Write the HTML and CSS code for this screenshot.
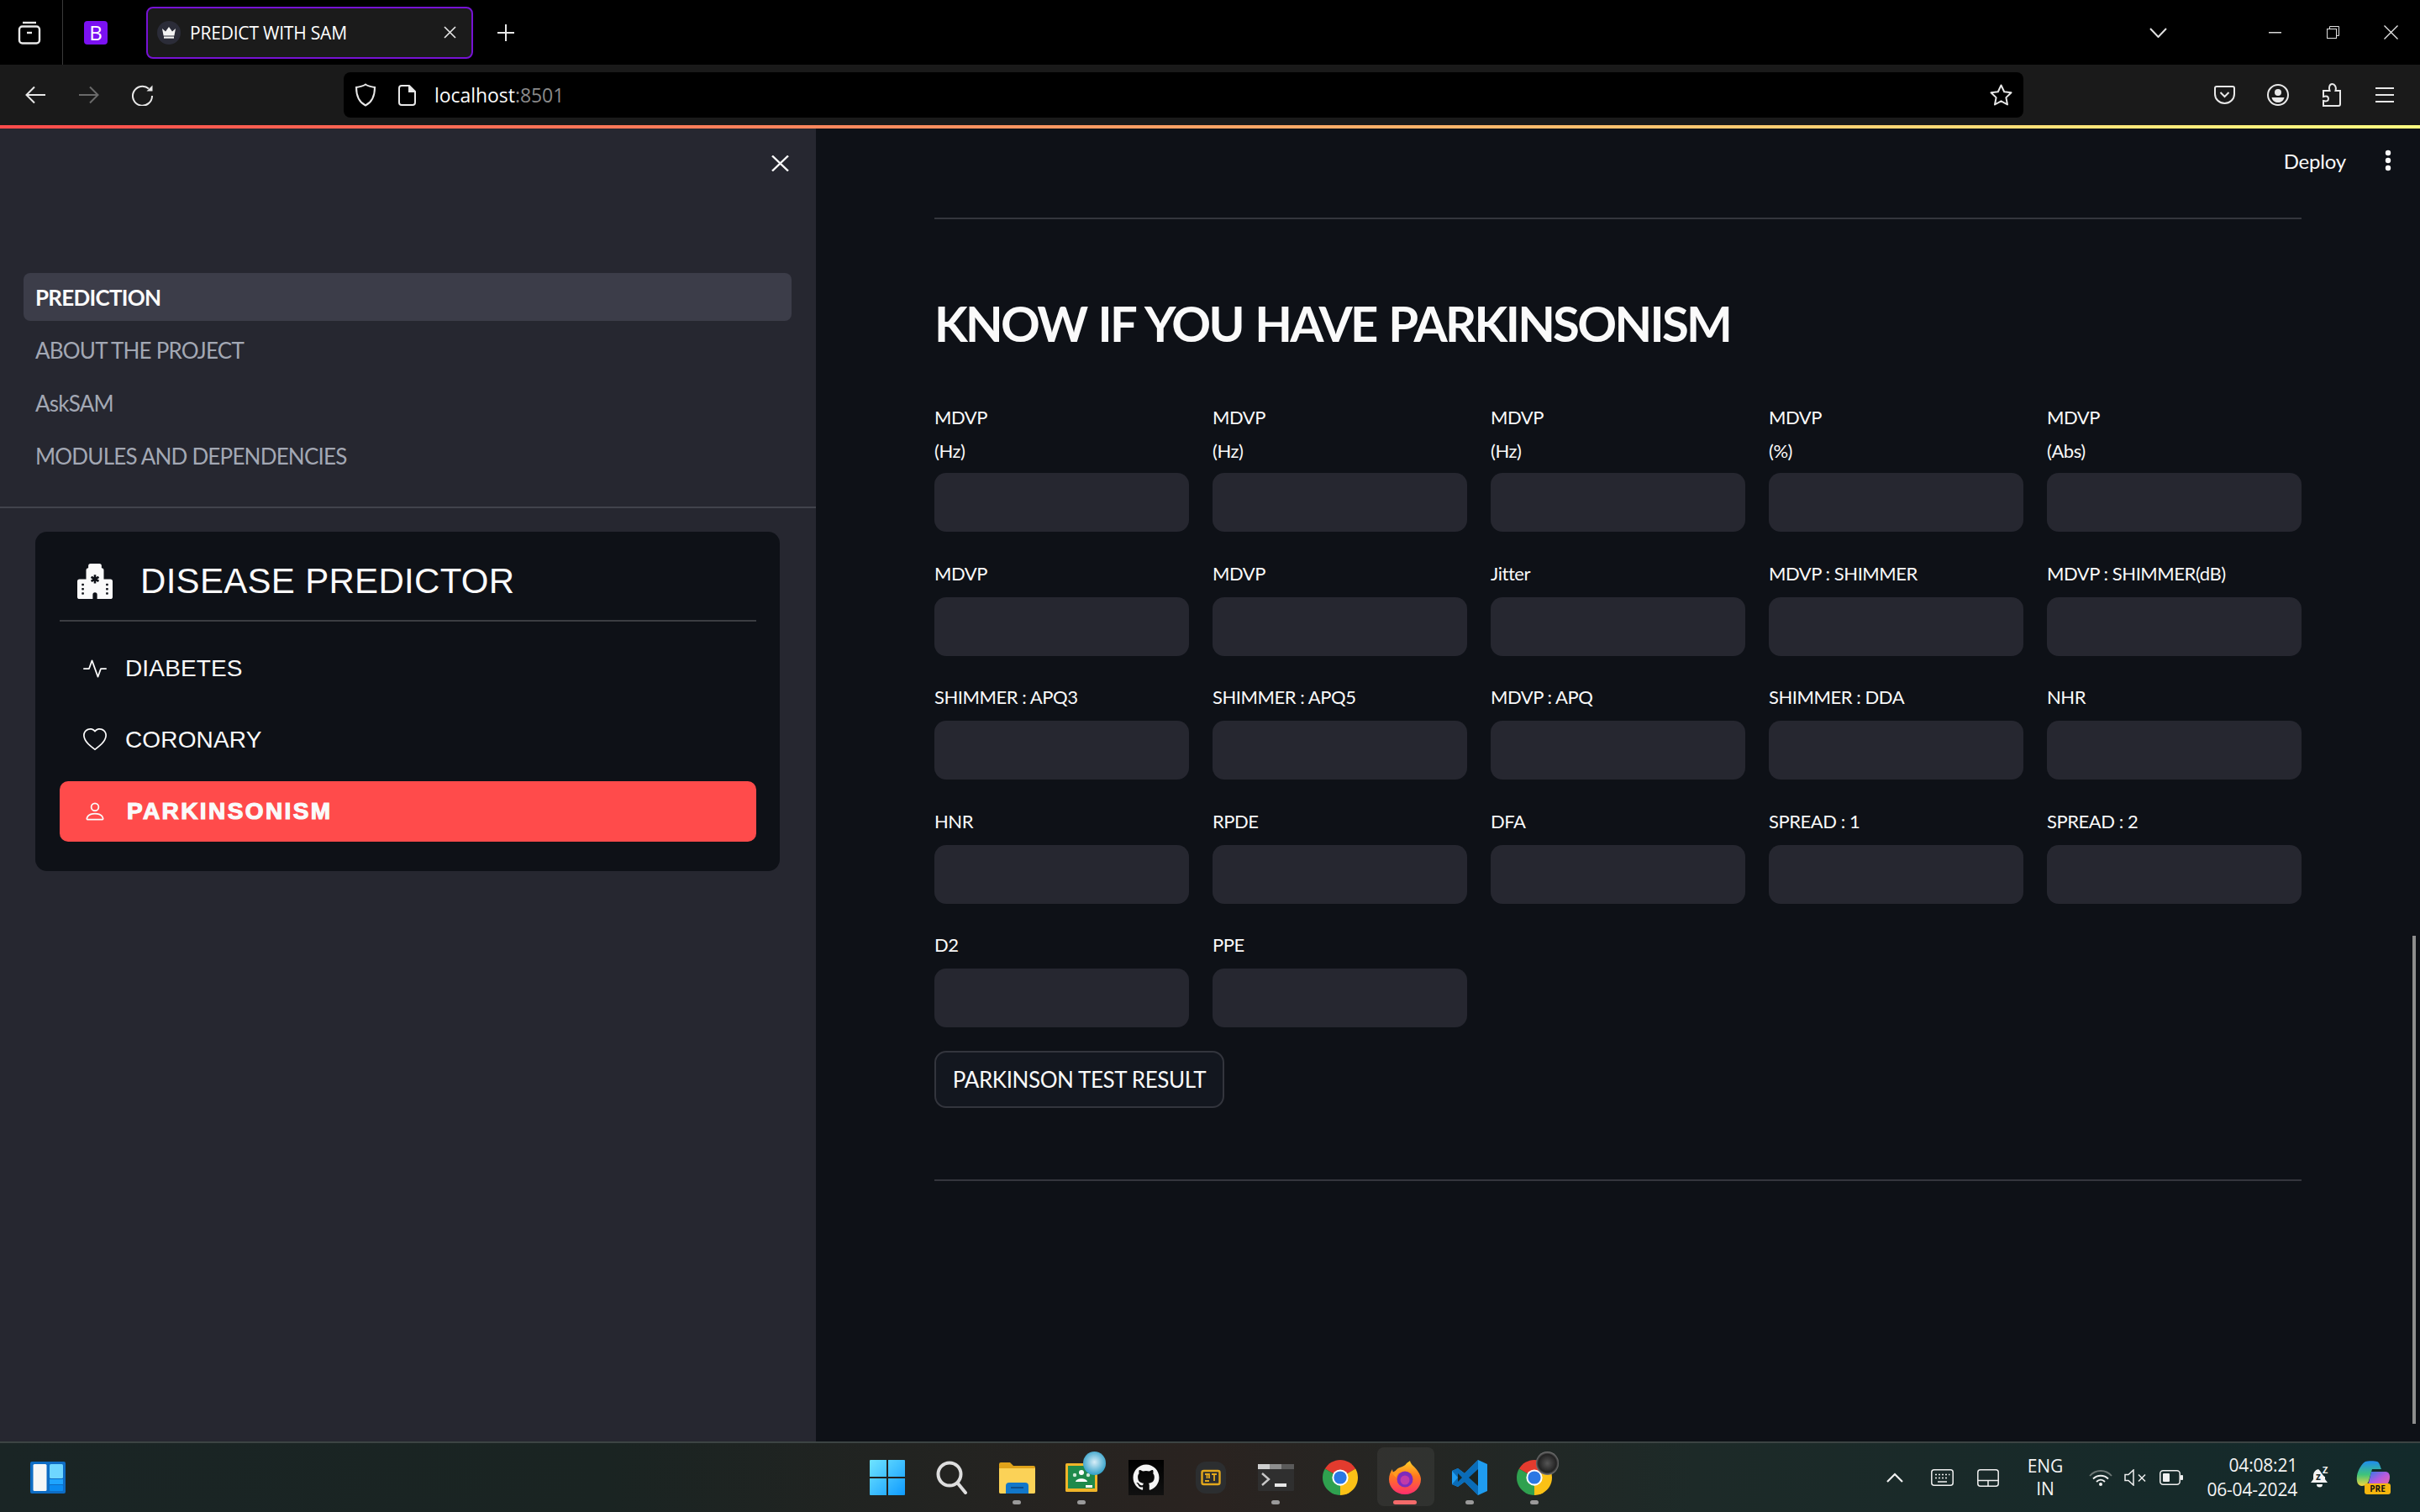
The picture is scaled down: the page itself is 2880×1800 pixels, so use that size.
FILE: index.html
```html
<!DOCTYPE html>
<html lang="en">
<head>
<meta charset="utf-8">
<title>PREDICT WITH SAM</title>
<link rel="stylesheet" href="styles.css">
</head>
<body>
<div class="window">
  <header class="tabbar">
    <svg class="i-group" width="28" height="28" viewBox="0 0 28 28" fill="none" stroke="#e8e8e8" stroke-width="2.4"><path d="M6 2h16"/><rect x="2" y="6.5" width="24" height="20" rx="3.5"/><path d="M11 14h6"/></svg>
    <div class="tab-sep"></div>
    <span class="i-b">B</span>
    <div class="tab">
      <span class="fav"><svg width="18" height="14" viewBox="0 0 18 14"><path d="M1 2l4 3.500L9 0l4 5.500L17 2l-1.600 8.500H2.600z" fill="#f4f4f4"/><rect x="3" y="11.500" width="12" height="2.200" fill="#f4f4f4"/></svg></span>
      <span class="tab-title">PREDICT WITH SAM</span>
      <svg class="tab-x" width="15" height="15" viewBox="0 0 15 15" stroke="#e8e8e8" stroke-width="1.600"><path d="M1 1l13 13M14 1L1 14"/></svg>
    </div>
    <svg class="i-plus" width="20" height="20" viewBox="0 0 20 20" stroke="#e8e8e8" stroke-width="2"><path d="M10 0v20M0 10h20"/></svg>
    <div class="win-ctrls">
      <svg class="i-chev" width="21" height="12" viewBox="0 0 21 12" fill="none" stroke="#e0e0e0" stroke-width="2"><path d="M1 1l9.500 10L20 1"/></svg>
      <svg class="i-min" width="15" height="2" viewBox="0 0 15 2"><rect width="15" height="1.500" fill="#d8d8d8"/></svg>
      <svg class="i-res" width="15" height="15" viewBox="0 0 15 15" fill="none" stroke="#e0e0e0" stroke-width="1"><rect x=".5" y="3.500" width="11" height="11"/><path d="M3.500 3.500v-3h11v11h-3"/></svg>
      <svg class="i-close" width="17" height="17" viewBox="0 0 17 17" stroke="#e8e8e8" stroke-width="1.300"><path d="M.5.500l16 16M16.500.500l-16 16"/></svg>
    </div>
  </header>

  <nav class="toolbar">
    <svg class="i-back" width="24" height="22" viewBox="0 0 24 22" fill="none" stroke="#e8e8e8" stroke-width="2"><path d="M24 11H2M11 1.500L1.500 11l9.500 9.500"/></svg>
    <svg class="i-fwd" width="24" height="22" viewBox="0 0 24 22" fill="none" stroke="#6a6a6a" stroke-width="2"><path d="M0 11h22M13 1.500l9.500 9.500-9.500 9.500"/></svg>
    <svg class="i-reload" width="25" height="26" viewBox="0 0 25 26" fill="none" stroke="#e8e8e8" stroke-width="2"><path d="M20 5.500A11.500 11.500 0 1 0 24 14"/><path d="M17.500 8.500H24.500V1.500z" fill="#e8e8e8" stroke="none"/></svg>
    <div class="urlbar">
      <svg width="26" height="28" viewBox="0 0 26 28" fill="none" stroke="#e8e8e8" stroke-width="2"><path d="M13 1.500c3 2 7 3 11 3.500 0 10-3 17.500-11 21.500C5 22.500 2 15 2 5c4-.5 8-1.500 11-3.500z"/></svg>
      <svg class="i-page" width="21" height="25" viewBox="0 0 21 25" fill="none" stroke="#e8e8e8" stroke-width="2"><path d="M4 1h9l7 7v13a3 3 0 0 1-3 3H4a3 3 0 0 1-3-3V4a3 3 0 0 1 3-3z"/><path d="M13 1v7h7" fill="#e8e8e8"/></svg>
      <span class="url"><span class="url-host">localhost</span><span class="url-port">:8501</span></span>
      <svg class="i-star" width="27" height="26" viewBox="0 0 27 26" fill="none" stroke="#e8e8e8" stroke-width="2" stroke-linejoin="round"><path d="M13.500 1.500l3.700 7.800 8.300 1-6.100 5.800 1.600 8.400-7.500-4.200-7.500 4.200 1.600-8.400L1.500 10.300l8.300-1z"/></svg>
    </div>
    <svg class="i-pocket" width="25" height="22" viewBox="0 0 25 22" fill="none" stroke="#e8e8e8" stroke-width="2"><path d="M3 1h19a2 2 0 0 1 2 2v7a11.500 11 0 0 1-23 0V3a2 2 0 0 1 2-2z"/><path d="M7.500 8l5 5 5-5"/></svg>
    <svg class="i-acct" width="26" height="26" viewBox="0 0 26 26" fill="none" stroke="#e8e8e8" stroke-width="2"><circle cx="13" cy="13" r="12"/><circle cx="13" cy="10" r="4" fill="#e8e8e8" stroke="none"/><path d="M5.500 16h15c-1 4-4 6-7.500 6s-6.500-2-7.500-6z" fill="#e8e8e8" stroke="none"/></svg>
    <svg class="i-ext" width="23" height="28" viewBox="0 0 23 28" fill="none" stroke="#e8e8e8" stroke-width="2"><path d="M2 27h18a2 2 0 0 0 2-2V9h-5.500c1.500-4-1-8-4-8s-4.500 4-3 8H2v7c4-1.500 6 0 6 2.500S6 22 2 21z"/></svg>
    <svg class="i-menu" width="22" height="18" viewBox="0 0 22 18" stroke="#e8e8e8" stroke-width="2"><path d="M0 1h22M0 9h22M0 17h22"/></svg>
  </nav>

  <div class="app">
    <div class="decoration"></div>
    <aside class="sidebar">
      <div class="side-head">
        <svg width="21" height="19" viewBox="0 0 21 19" stroke="#fafafa" stroke-width="2.400"><path d="M1 .500l19 18M20 .500l-19 18"/></svg>
      </div>
      <ul class="pages">
        <li class="page active">PREDICTION</li>
        <li class="page">ABOUT THE PROJECT</li>
        <li class="page">AskSAM</li>
        <li class="page">MODULES AND DEPENDENCIES</li>
      </ul>
      <hr class="side-rule">
      <section class="card">
        <div class="card-head">
          <svg width="42" height="42" viewBox="0 0 16 16" fill="#fafafa"><path d="M6 0a1 1 0 0 0-1 1v1a1 1 0 0 0-1 1v4H1a1 1 0 0 0-1 1v7a1 1 0 0 0 1 1h6v-2a1 1 0 1 1 2 0v2h6a1 1 0 0 0 1-1V8a1 1 0 0 0-1-1h-3V3a1 1 0 0 0-1-1V1a1 1 0 0 0-1-1H6Zm2.500 5.034v1.100l.953-.55.5.867L9 7l.953.55-.5.866-.953-.55v1.100h-1v-1.100l-.953.55-.5-.866L7 7l-.953-.55.5-.866.953.55v-1.100h1ZM2.250 9h.5a.25.25 0 0 1 .25.25v.5a.25.25 0 0 1-.25.25h-.5A.25.25 0 0 1 2 9.750v-.5A.25.25 0 0 1 2.250 9Zm0 2h.5a.25.25 0 0 1 .25.25v.5a.25.25 0 0 1-.25.25h-.5a.25.25 0 0 1-.25-.25v-.5a.25.25 0 0 1 .25-.25ZM2 13.250a.25.25 0 0 1 .25-.25h.5a.25.25 0 0 1 .25.25v.5a.25.25 0 0 1-.25.25h-.5a.25.25 0 0 1-.25-.25v-.5ZM13.250 9h.5a.25.25 0 0 1 .25.25v.5a.25.25 0 0 1-.25.25h-.5a.25.25 0 0 1-.25-.25v-.5a.25.25 0 0 1 .25-.25ZM13 11.250a.25.25 0 0 1 .25-.25h.5a.25.25 0 0 1 .25.25v.5a.25.25 0 0 1-.25.25h-.5a.25.25 0 0 1-.25-.25v-.5Zm.25 1.750h.5a.25.25 0 0 1 .25.25v.5a.25.25 0 0 1-.25.25h-.5a.25.25 0 0 1-.25-.25v-.5a.25.25 0 0 1 .25-.25Z"/></svg>
          <span class="card-title">DISEASE PREDICTOR</span>
        </div>
        <hr class="card-rule">
        <div class="menu">
          <a class="item">
            <svg width="28" height="28" viewBox="0 0 16 16" fill="#fafafa"><path d="M6 2a.5.5 0 0 1 .47.33L10 12.036l1.530-4.208A.5.5 0 0 1 12 7.500h3.500a.5.5 0 0 1 0 1h-3.150l-1.880 5.170a.5.5 0 0 1-.94 0L6 3.964 4.470 8.171A.5.5 0 0 1 4 8.500H.5a.5.5 0 0 1 0-1h3.150l1.880-5.170A.5.5 0 0 1 6 2Z"/></svg>
            <span>DIABETES</span>
          </a>
          <a class="item">
            <svg width="28" height="28" viewBox="0 0 16 16" fill="#fafafa"><path d="m8 2.748-.717-.737C5.600.281 2.514.878 1.400 3.053c-.523 1.023-.641 2.500.314 4.385.92 1.815 2.834 3.989 6.286 6.357 3.452-2.368 5.365-4.542 6.286-6.357.955-1.886.838-3.362.314-4.385C13.486.878 10.400.28 8.717 2.010L8 2.748zM8 15C-7.333 4.868 3.279-3.040 7.824 1.143c.06.055.119.112.176.171a3.120 3.120 0 0 1 .176-.17C12.720-3.042 23.333 4.867 8 15z"/></svg>
            <span>CORONARY</span>
          </a>
          <a class="item selected">
            <svg width="28" height="28" viewBox="0 0 16 16" fill="#fafafa"><path d="M8 8a3 3 0 1 0 0-6 3 3 0 0 0 0 6Zm2-3a2 2 0 1 1-4 0 2 2 0 0 1 4 0Zm4 8c0 1-1 1-1 1H3s-1 0-1-1 1-4 6-4 6 3 6 4Zm-1-.004c-.001-.246-.154-.986-.832-1.664C11.516 10.680 10.289 10 8 10c-2.290 0-3.516.68-4.168 1.332-.678.678-.83 1.418-.832 1.664h10Z"/></svg>
            <span>PARKINSONISM</span>
          </a>
        </div>
      </section>
    </aside>

    <main class="main">
      <div class="main-top">
        <span class="deploy">Deploy</span>
        <svg width="8" height="26" viewBox="0 0 8 26" fill="#fafafa"><circle cx="4" cy="4" r="3.200"/><circle cx="4" cy="13" r="3.200"/><circle cx="4" cy="22" r="3.200"/></svg>
      </div>
      <hr class="rule">
      <h1 class="heading">KNOW IF YOU HAVE PARKINSONISM</h1>
      <form class="fields">
        <label class="field"><span class="lbl lbl-two">MDVP<br>(Hz)</span><span class="box"></span></label>
        <label class="field"><span class="lbl lbl-two">MDVP<br>(Hz)</span><span class="box"></span></label>
        <label class="field"><span class="lbl lbl-two">MDVP<br>(Hz)</span><span class="box"></span></label>
        <label class="field"><span class="lbl lbl-two">MDVP<br>(%)</span><span class="box"></span></label>
        <label class="field"><span class="lbl lbl-two">MDVP<br>(Abs)</span><span class="box"></span></label>
        <label class="field"><span class="lbl">MDVP</span><span class="box"></span></label>
        <label class="field"><span class="lbl">MDVP</span><span class="box"></span></label>
        <label class="field"><span class="lbl">Jitter</span><span class="box"></span></label>
        <label class="field"><span class="lbl">MDVP : SHIMMER</span><span class="box"></span></label>
        <label class="field"><span class="lbl">MDVP : SHIMMER(dB)</span><span class="box"></span></label>
        <label class="field"><span class="lbl">SHIMMER : APQ3</span><span class="box"></span></label>
        <label class="field"><span class="lbl">SHIMMER : APQ5</span><span class="box"></span></label>
        <label class="field"><span class="lbl">MDVP : APQ</span><span class="box"></span></label>
        <label class="field"><span class="lbl">SHIMMER : DDA</span><span class="box"></span></label>
        <label class="field"><span class="lbl">NHR</span><span class="box"></span></label>
        <label class="field"><span class="lbl">HNR</span><span class="box"></span></label>
        <label class="field"><span class="lbl">RPDE</span><span class="box"></span></label>
        <label class="field"><span class="lbl">DFA</span><span class="box"></span></label>
        <label class="field"><span class="lbl">SPREAD : 1</span><span class="box"></span></label>
        <label class="field"><span class="lbl">SPREAD : 2</span><span class="box"></span></label>
        <label class="field"><span class="lbl">D2</span><span class="box"></span></label>
        <label class="field"><span class="lbl">PPE</span><span class="box"></span></label>
      </form>
      <button class="result" type="button">PARKINSON TEST RESULT</button>
      <hr class="rule rule-end">
      <div class="scroll-thumb"></div>
    </main>
  </div>

  <footer class="taskbar">
    <svg class="i-widgets" width="42" height="38" viewBox="0 0 42 38"><rect width="42" height="38" rx="2" fill="#0e6cc4"/><rect x="3.500" y="3" width="16" height="32" rx="1.500" fill="#f6f6f6"/><rect x="23" y="3" width="16" height="17" rx="1.500" fill="#6fd6ff"/><rect x="23" y="21" width="16" height="6" fill="#1fa4ff"/><rect x="23" y="28" width="16" height="7" rx="1" fill="#0b8bf0"/></svg>
    <div class="apps">
      <div class="slot">
        <svg width="42" height="42" viewBox="0 0 42 42"><defs><linearGradient id="w1" x1="0" y1="0" x2="1" y2="1"><stop offset="0" stop-color="#6fe4ff"/><stop offset="1" stop-color="#0f9bff"/></linearGradient></defs><path fill="url(#w1)" d="M1 0h19v20H0V1a1 1 0 0 1 1-1zM22 0h19a1 1 0 0 1 1 1v19H22zM0 22h20v20H1a1 1 0 0 1-1-1zM22 22h20v19a1 1 0 0 1-1 1H22z"/></svg>
      </div>
      <div class="slot">
        <svg width="38" height="40" viewBox="0 0 38 40" fill="none" stroke="#dedede"><circle cx="16" cy="16" r="13.500" stroke-width="4"/><path d="M26 27l9 11" stroke-width="4" stroke-linecap="round"/></svg>
      </div>
      <div class="slot">
        <svg width="43" height="38" viewBox="0 0 43 38"><path d="M0 3a2 2 0 0 1 2-2h11l4 4h24a2 2 0 0 1 2 2v29a2 2 0 0 1-2 2H2a2 2 0 0 1-2-2z" fill="#e0a31a"/><path d="M0 8h43v28a2 2 0 0 1-2 2H2a2 2 0 0 1-2-2z" fill="#fbd257"/><path d="M8 38V29a4 4 0 0 1 4-4h19a4 4 0 0 1 4 4v9z" fill="#1277c9"/><rect x="14" y="30" width="15" height="2" fill="#0d4f8c"/></svg>
        <i class="dot"></i>
      </div>
      <div class="slot">
        <svg width="38" height="34" viewBox="0 0 38 34"><rect width="38" height="34" rx="1.500" fill="#f0b429"/><rect x="3" y="3" width="32" height="27" fill="#1f8a4c"/><circle cx="19" cy="11" r="3" fill="#fff"/><circle cx="11" cy="14" r="2.200" fill="#cfe8d6"/><circle cx="27" cy="14" r="2.200" fill="#cfe8d6"/><path d="M12 22c1-5 13-5 14 0z" fill="#fff"/><rect x="24" y="26" width="8" height="3" fill="#fff"/></svg>
        <i class="badge badge-blue"></i>
        <i class="dot"></i>
      </div>
      <div class="slot">
        <svg width="42" height="42" viewBox="0 0 42 42"><defs><linearGradient id="gh" x1="0" y1="0" x2="0" y2="1"><stop offset="0" stop-color="#000"/><stop offset="1" stop-color="#111"/></linearGradient></defs><rect width="42" height="42" fill="url(#gh)"/><path transform="translate(5.500 5.500) scale(1.290)" fill="#f4f4f4" d="M12 0C5.370 0 0 5.370 0 12c0 5.300 3.440 9.800 8.200 11.390.6.110.82-.26.82-.58 0-.29-.01-1.040-.02-2.040-3.340.73-4.040-1.610-4.040-1.610-.55-1.390-1.330-1.760-1.330-1.760-1.090-.74.08-.73.08-.73 1.200.08 1.840 1.240 1.840 1.240 1.070 1.830 2.810 1.300 3.500 1 .11-.78.42-1.300.76-1.600-2.670-.3-5.470-1.330-5.470-5.930 0-1.310.47-2.380 1.240-3.220-.14-.3-.54-1.520.1-3.180 0 0 1-.32 3.300 1.230a11.500 11.500 0 0 1 6 0c2.280-1.550 3.290-1.230 3.290-1.230.64 1.660.24 2.880.12 3.180a4.650 4.650 0 0 1 1.230 3.220c0 4.610-2.800 5.620-5.480 5.920.42.36.81 1.100.81 2.220 0 1.600-.02 2.900-.02 3.290 0 .32.22.7.82.58C20.560 21.800 24 17.300 24 12c0-6.630-5.370-12-12-12z"/></svg>
      </div>
      <div class="slot">
        <svg width="36" height="38" viewBox="0 0 36 38"><rect width="36" height="38" rx="12" fill="#2c2e30"/><rect x="7.500" y="11" width="21" height="16" rx="2" fill="none" stroke="#e3a81c" stroke-width="2.400"/><path d="M11 15h5v5M13.500 15v5M19 15h6M22 15v8M11 23h5" fill="none" stroke="#e3a81c" stroke-width="1.800"/></svg>
      </div>
      <div class="slot">
        <svg width="43" height="32" viewBox="0 0 43 32"><rect width="43" height="32" rx="1.500" fill="#2f2f2f"/><rect width="14" height="6" fill="#cfcfcf"/><rect x="14" width="14" height="6" fill="#8e8e8e"/><rect x="28" width="15" height="6" fill="#5a5a5a"/><path d="M5 11l8 7-8 7" fill="none" stroke="#c8c8c8" stroke-width="2.400"/><rect x="20" y="23" width="14" height="4" fill="#e8e8e8"/></svg>
        <i class="dot"></i>
      </div>
      <div class="slot">
        <svg width="42" height="42" viewBox="0 0 48 48"><path d="M24 24L3.220 12A24 24 0 0 1 44.780 12z" fill="#e33b2e"/><path d="M24 24L44.780 12A24 24 0 0 1 24 48z" fill="#fbc116"/><path d="M24 24L24 48A24 24 0 0 1 3.220 12z" fill="#2fa14f"/><circle cx="24" cy="24" r="11" fill="#fff"/><circle cx="24" cy="24" r="8.700" fill="#2b78e4"/></svg>
      </div>
      <div class="slot slot-active">
        <svg width="38" height="40" viewBox="0 0 38 40"><defs><linearGradient id="ff" x1="0" y1="0" x2="0" y2="1"><stop offset="0" stop-color="#ffd129"/><stop offset=".45" stop-color="#ff7a1c"/><stop offset="1" stop-color="#ff2d6f"/></linearGradient></defs><path fill="url(#ff)" d="M25 0c1 5 6 7 9 12 3 4 4 8 4 10 0 10-8 18-19 18S0 32 0 22c0-5 2-9 4-12 0 2 1 4 2 5 1-3 4-6 7-7 3-1 6-2 8-5 1-1 3-2 4-3z"/><circle cx="19" cy="22" r="9.500" fill="#7d2bbd"/><circle cx="19" cy="23" r="5.500" fill="#c23aa8"/><path d="M4 14c4-3 9-4 12-1-4 0-7 3-7 7-2-1-4-3-5-6z" fill="#ff9a1f"/></svg>
        <i class="dot dot-red"></i>
      </div>
      <div class="slot">
        <svg width="42" height="42" viewBox="0 0 42 42"><path d="M31 0l11 5v32l-11 5-16-16-8 6-7-3V13l7-3 8 6z" fill="#1f9cf0"/><path d="M31 0v42L15 26l-8 6-7-3 7-8-7-8 7-3 8 6z" fill="#0a6cb8"/><path d="M31 11L20 21l11 10z" fill="#1a2420"/><path d="M7 16v10l5-5z" fill="#1a2420"/></svg>
        <i class="dot"></i>
      </div>
      <div class="slot">
        <svg width="42" height="42" viewBox="0 0 48 48"><path d="M24 24L3.220 12A24 24 0 0 1 44.780 12z" fill="#e33b2e"/><path d="M24 24L44.780 12A24 24 0 0 1 24 48z" fill="#fbc116"/><path d="M24 24L24 48A24 24 0 0 1 3.220 12z" fill="#2fa14f"/><circle cx="24" cy="24" r="11" fill="#fff"/><circle cx="24" cy="24" r="8.700" fill="#2b78e4"/></svg>
        <i class="badge badge-grey"></i>
        <i class="dot"></i>
      </div>
    </div>
    <div class="tray">
      <svg class="t-chev" width="20" height="12" viewBox="0 0 20 12" fill="none" stroke="#f0f0f0" stroke-width="2.200"><path d="M1 11l9-9 9 9"/></svg>
      <svg class="t-kb" width="27" height="20" viewBox="0 0 27 20" fill="none" stroke="#f0f0f0" stroke-width="1.500"><rect x=".8" y=".8" width="25.400" height="18.400" rx="3"/><path d="M5 6.500h2M9 6.500h2M13 6.500h2M17 6.500h2M21 6.500h1.500M5 10.500h2M9 10.500h2M13 10.500h2M17 10.500h2M8 15h11" stroke-width="1.700"/></svg>
      <svg class="t-pad" width="26" height="21" viewBox="0 0 26 21" fill="none" stroke="#f0f0f0" stroke-width="1.500"><rect x=".8" y=".8" width="24.400" height="19.400" rx="3"/><path d="M1 13.500h24M13 13.500V20"/></svg>
      <div class="lang"><span>ENG</span><span>IN</span></div>
      <svg class="t-wifi" width="28" height="20" viewBox="0 0 28 20" fill="none"><path d="M1 8c7-8 19-8 26 0" stroke="#6d7675" stroke-width="1.800"/><path d="M5 11.500c5-5 13-5 18 0M9 15c3-3 7-3 10 0" stroke="#f0f0f0" stroke-width="1.900"/><circle cx="14" cy="18" r="2" fill="#f0f0f0"/></svg>
      <svg class="t-vol" width="27" height="20" viewBox="0 0 27 20" fill="none" stroke="#f0f0f0" stroke-width="1.500"><path d="M1 6.500h4L11 1v18l-6-5.500H1z"/><path d="M17 6.500l8 8M25 6.500l-8 8"/></svg>
      <svg class="t-bat" width="28" height="18" viewBox="0 0 28 18" fill="none" stroke="#f0f0f0" stroke-width="1.500"><rect x=".8" y=".8" width="23.400" height="16.400" rx="3.500"/><rect x="4" y="4" width="8" height="10" rx="1" fill="#f0f0f0" stroke="none"/><rect x="25" y="6" width="3" height="6" rx="1" fill="#f0f0f0" stroke="none"/></svg>
      <div class="clock"><span>04:08:21</span><span>06-04-2024</span></div>
      <svg class="t-bell" width="24" height="36" viewBox="0 -5 24 36"><path d="M9 3c-4 1-6 4-6 8v4l-3 4h20l-3-4v-3c-2 0-6-8-8-9z" fill="#f4f4f4"/><path d="M7 21h7a3.500 3.500 0 0 1-7 0z" fill="#f4f4f4"/><text x="6" y="16" class="zz">z</text><text x="14" y="8" class="zz zz-s">Z</text></svg>
      <div class="copilot">
        <svg width="41" height="32" viewBox="0 0 41 32"><defs><linearGradient id="cp1" x1="0" y1="0" x2="0" y2="1"><stop offset="0" stop-color="#1e8bf0"/><stop offset=".55" stop-color="#3fc47a"/><stop offset="1" stop-color="#f5d63d"/></linearGradient><linearGradient id="cp2" x1="0" y1="0" x2="1" y2="1"><stop offset="0" stop-color="#2a7de8"/><stop offset=".5" stop-color="#b45ae0"/><stop offset="1" stop-color="#f06aa0"/></linearGradient></defs><path d="M11 1c2-1 12-1 14 0 3 1 4 7 5 9H19l-4 14c-1 3-4 6-8 6-5 0-7-5-6-12C2 11 7 3 11 1z" fill="url(#cp1)"/><path d="M18 13h17c4 0 5 4 5 6 0 6-3 11-8 11H14z" fill="url(#cp2)"/></svg>
        <span class="pre">PRE</span>
      </div>
    </div>
  </footer>
</div>
</body>
</html>
```
FILE: styles.css
```css
* { box-sizing: border-box; }
html, body { margin: 0; padding: 0; height: 100%; background: #000; overflow: hidden; }
svg { display: block; flex: none; }
.window { width: 2880px; height: 1800px; display: flex; flex-direction: column; font-family: "Lato", "Open Sans", sans-serif; color: #fafafa; }

/* browser tab strip */
.tabbar { height: 77px; flex: none; display: flex; align-items: center; background: #000; padding-left: 21px; padding-right: 26px; }
.tab-sep { width: 1px; height: 77px; background: #3a3a3a; margin-left: 25px; }
.i-b { margin-left: 25px; width: 28px; height: 28px; display: flex; align-items: center; justify-content: center; flex: none; background: #7b11f2; border-radius: 4px; color: #fff; font: 400 24px/28px "Open Sans", sans-serif; }
.tab { margin-left: 46px; width: 389px; height: 62px; display: flex; align-items: center; background: #1b1b1b; border: 2px solid #7712d4; border-radius: 8px; padding-left: 11px; padding-right: 18px; }
.fav { width: 28px; height: 28px; border-radius: 50%; background: #2b2c38; display: flex; align-items: center; justify-content: center; }
.tab-title { margin-left: 11px; font: 400 21px "Open Sans", sans-serif; letter-spacing: -.2px; color: #fff; }
.tab-x { margin-left: auto; }
.i-plus { margin-left: 29px; }
.win-ctrls { margin-left: auto; display: flex; align-items: center; }
.i-min { margin-left: 121px; }
.i-res { margin-left: 54px; }
.i-close { margin-left: 53px; }

/* browser toolbar */
.toolbar { height: 72px; flex: none; display: flex; align-items: center; background: #1a1a1a; padding-left: 30px; }
.i-fwd { margin-left: 40px; }
.i-reload { margin-left: 39px; }
.urlbar { margin-left: 227px; width: 1999px; height: 54px; display: flex; align-items: center; background: #000; border-radius: 8px; padding: 0 13px; }
.i-page { margin-left: 26px; }
.url { margin-left: 22px; font: 400 23px "Open Sans", sans-serif; letter-spacing: -.05px; }
.url-host { color: #fbfbfb; }
.url-port { color: #8a8a8a; }
.i-star { margin-left: auto; }
.i-pocket { margin-left: 227px; }
.i-acct { margin-left: 38px; }
.i-ext { margin-left: 39px; }
.i-menu { margin-left: 41px; }

/* streamlit app */
.app { position: relative; flex: 1; min-height: 0; display: flex; background: #0e1117; }
.decoration { position: absolute; top: 0; left: 0; right: 0; height: 4px; background: linear-gradient(90deg, #ff4b4b, #fffd80); z-index: 2; }

.sidebar { width: 971px; flex: none; background: #262730; display: flex; flex-direction: column; }
.side-head { height: 176px; display: flex; justify-content: flex-end; padding: 36px 32px 0 0; }
.pages { list-style: none; margin: 0; padding: 0 29px 0 28px; display: flex; flex-direction: column; gap: 6.300px; }
.page { height: 57px; display: flex; align-items: center; padding-left: 14px; border-radius: 8px; font-size: 26px; letter-spacing: -.8px; color: #a3a8b4; }
.page.active { background: #3c3d49; color: #fafafa; font-weight: 700; letter-spacing: -.75px; }
.side-rule { height: 2px; border: 0; margin: 31px 0 28px; background: #41434c; }

.card { margin: 0 43px 0 42px; background: #0e1117; border-radius: 14px; padding: 20px 28px 35px 29px; }
.card-head { height: 78px; display: flex; align-items: center; padding-left: 21px; }
.card-title { margin-left: 33px; font: 400 42px "Liberation Sans", Arial, sans-serif; letter-spacing: .3px; color: #fafafa; }
.card-rule { height: 2px; border: 0; margin: 7px 0 20px; background: #3b3d42; }
.menu { display: flex; flex-direction: column; gap: 13px; }
.item { height: 72px; display: flex; align-items: center; gap: 22px; padding-left: 28px; border-radius: 10px; font: 400 28px "Liberation Sans", Arial, sans-serif; letter-spacing: .15px; color: #fafafa; }
.item.selected { background: #ff4b4b; gap: 24px; font-weight: 700; letter-spacing: 2.400px; -webkit-text-stroke: 1.200px #fafafa; }

.main { position: relative; flex: 1; min-width: 0; padding: 110px 141px 0 141px; }
.main-top { position: absolute; top: 29px; right: 34px; height: 26px; display: flex; align-items: center; gap: 46px; }
.deploy { font-size: 24px; letter-spacing: -.2px; color: #fafafa; }
.rule { height: 2px; border: 0; margin: 0; background: #34363d; }
.heading { margin: 74px 0 40px; height: 100px; line-height: 100px; font-size: 58px; font-weight: 700; letter-spacing: -2.700px; word-spacing: 3px; color: #fafafa; white-space: nowrap; }
.fields { display: grid; grid-template-columns: repeat(5, 303px); column-gap: 28px; row-gap: 29.500px; }
.field { display: flex; flex-direction: column; justify-content: flex-end; gap: 8px; }
.lbl { font-size: 22px; line-height: 40px; letter-spacing: -.45px; color: #fafafa; }
.lbl-two { padding-top: 2px; margin-bottom: -2px; }
.box { height: 70px; background: #262730; border-radius: 14px; }
.result { display: block; margin-top: 28px; width: 345px; height: 68px; padding: 0; background: #13171f; border: 2px solid #33353d; border-radius: 14px; color: #fafafa; font: 400 26px "Lato", sans-serif; letter-spacing: -.4px; }
.rule-end { margin-top: 85px; }
.scroll-thumb { position: absolute; top: 965px; right: 5px; width: 4px; height: 581px; background: #8e8e8e; }

/* windows taskbar */
.taskbar { height: 84px; flex: none; display: flex; align-items: center; border-top: 2px solid #3c4443; background: linear-gradient(90deg, #1a2525 0%, #1a2422 25%, #2a2320 50%, #1d2a28 70%, #132a2b 100%); padding-left: 36px; padding-right: 35px; }
.apps { margin-left: 939.500px; display: flex; }
.slot { position: relative; width: 77px; height: 82px; display: flex; align-items: center; justify-content: center; }
.slot-active::before { content: ""; position: absolute; left: 5px; right: 4px; top: 5px; bottom: 7px; background: rgba(255,255,255,.06); border-radius: 8px; }
.slot svg { position: relative; }
.dot { position: absolute; left: 50%; bottom: 9px; width: 10px; height: 5px; margin-left: -5px; border-radius: 3px; background: #9a9a9a; }
.dot-red { width: 28px; margin-left: -14px; background: #f26a6a; }
.badge { position: absolute; left: 50%; top: 10px; width: 27px; height: 28px; margin-left: 2px; border-radius: 50%; }
.badge-blue { background: radial-gradient(circle at 50% 45%, #d8eef8, #2f9fc8 75%); }
.badge-grey { background: radial-gradient(circle at 50% 50%, #555, #222 55%, #ddd 90%); }
.tray { margin-left: auto; display: flex; align-items: center; color: #f4f4f4; }
.t-kb { margin-left: 33px; }
.t-pad { margin-left: 28px; }
.lang { margin-left: 30px; width: 50px; display: flex; flex-direction: column; align-items: center; font: 400 21px/27px "Open Sans", sans-serif; }
.t-wifi { margin-left: 27px; }
.t-vol { margin-left: 14px; }
.t-bat { margin-left: 15px; }
.clock { width: 136px; display: flex; flex-direction: column; align-items: flex-end; font: 400 21px/29px "Open Sans", sans-serif; letter-spacing: -.2px; }
.t-bell { margin-left: 16px; }
.zz { font: 700 12px "Open Sans", sans-serif; fill: #1a2a2a; }
.zz-s { fill: #f4f4f4; font-size: 11px; }
.copilot { position: relative; margin-left: 30px; width: 41px; height: 40px; }
.pre { position: absolute; right: 0; bottom: 0; width: 31px; height: 13px; background: #f5b60f; border-radius: 3px; color: #111; font: 700 10px/13px "Open Sans", sans-serif; text-align: center; }
```
